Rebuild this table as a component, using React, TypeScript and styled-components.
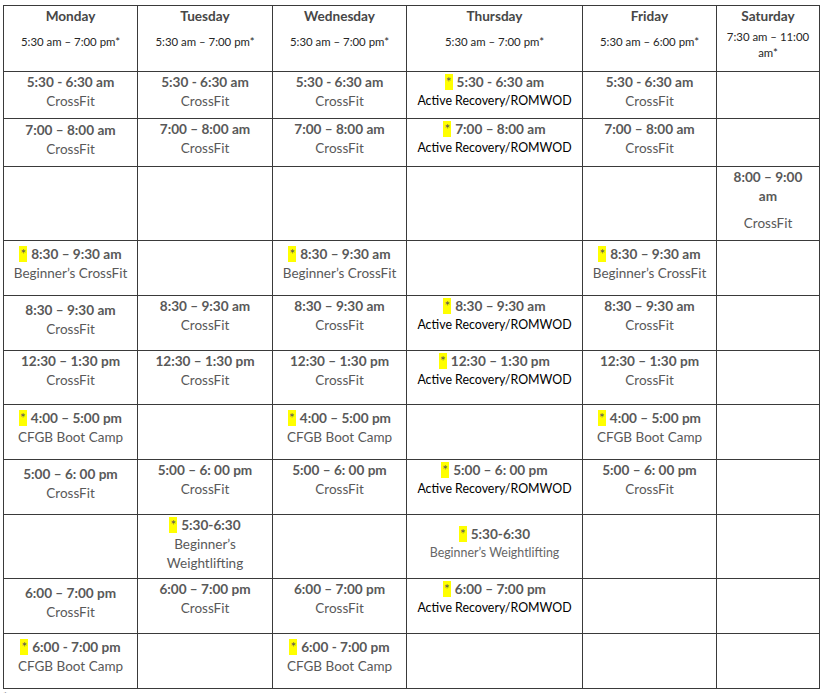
import React from 'react';
import styled, { createGlobalStyle } from 'styled-components';

type LineKind = 'time' | 'class' | 'active' | 'faint';

interface Line {
    text: string,
    kind: LineKind,
    star?: boolean,
    gap?: number
}

interface Slot {
    lines: Line[],
    drop?: number
}

interface Day {
    name: string,
    hours: string[]
}

const GlobalStyle = createGlobalStyle`
    html, body {
        margin: 0;
        padding: 0;
        background: #fff;
    }
    body {
        font-family: Lato, "Open Sans", "Liberation Sans", sans-serif;
        color: #595959;
    }
`;

const Page = styled.div`
    padding: 5px 0 0 3px;
`;

const Table = styled.table`
    width: 816px;
    border-collapse: collapse;
    table-layout: fixed;
`;

const Row = styled.tr<{ $h: number }>`
    height: ${p => p.$h}px;
`;

const HeadCell = styled.th`
    border: 1px solid #3a3a3a;
    padding: 1px 7px 0;
    vertical-align: top;
    text-align: center;
    font-weight: normal;
`;

const DayName = styled.div`
    font-size: 13.6px;
    font-weight: 700;
    line-height: 19px;
    color: #474747;
`;

const Hours = styled.div<{ $wrapped: boolean }>`
    margin-top: ${p => p.$wrapped ? 3 : 8}px;
    font-size: 11.4px;
    line-height: 16px;
    color: #262626;
`;

const Cell = styled.td<{ $drop: number }>`
    border: 1px solid #3a3a3a;
    padding: ${p => 1 + p.$drop}px 6px 0;
    vertical-align: top;
    text-align: center;
`;

const Text = styled.div<{ $kind: LineKind, $gap: number }>`
    margin-top: ${p => p.$gap}px;
    white-space: nowrap;
    font-size: ${p => p.$kind === 'time' ? '13.6px' : p.$kind === 'class' ? '13.5px' : '12.4px'};
    font-weight: ${p => p.$kind === 'time' ? 700 : 400};
    line-height: ${p => p.$kind === 'active' || p.$kind === 'faint' ? '17px' : '19px'};
    color: ${p => p.$kind === 'active' ? '#000' : p.$kind === 'faint' ? '#666' : '#595959'};
`;

const Mark = styled.span`
    padding: 0 1px;
    margin-right: 4px;
    background: #ffff00;
    color: #555;
    font-weight: 400;
`;

const Footnote = styled.div`
    margin-top: 1px;
    font-size: 11px;
    line-height: 14px;
    color: #333;
`;

const days: Day[] = [
    { name: 'Monday', hours: ['5:30 am – 7:00 pm*'] },
    { name: 'Tuesday', hours: ['5:30 am – 7:00 pm*'] },
    { name: 'Wednesday', hours: ['5:30 am – 7:00 pm*'] },
    { name: 'Thursday', hours: ['5:30 am – 7:00 pm*'] },
    { name: 'Friday', hours: ['5:30 am – 6:00 pm*'] },
    { name: 'Saturday', hours: ['7:30 am – 11:00', 'am*'] },
];

const widths = [134, 135, 134, 176, 134, 103];

const cf = (time: string, drop = 0): Slot => ({
    drop,
    lines: [{ kind: 'time', text: time }, { kind: 'class', text: 'CrossFit' }]
});

const starred = (time: string, name: string): Slot => ({
    drop: 3,
    lines: [{ kind: 'time', text: time, star: true }, { kind: 'class', text: name }]
});

const recovery = (time: string): Slot => ({
    lines: [{ kind: 'time', text: time, star: true }, { kind: 'active', text: 'Active Recovery/ROMWOD' }]
});

const rows: { h: number, cells: (Slot | null)[] }[] = [
    { h: 47, cells: [cf('5:30 - 6:30 am'), cf('5:30 - 6:30 am'), cf('5:30 - 6:30 am'), recovery('5:30 - 6:30 am'), cf('5:30 - 6:30 am'), null] },
    { h: 48, cells: [cf('7:00 – 8:00 am', 1), cf('7:00 – 8:00 am'), cf('7:00 – 8:00 am'), recovery('7:00 – 8:00 am'), cf('7:00 – 8:00 am'), null] },
    {
        h: 74, cells: [null, null, null, null, null, {
            lines: [
                { kind: 'time', text: '8:00 – 9:00' },
                { kind: 'time', text: 'am' },
                { kind: 'class', text: 'CrossFit', gap: 8 },
            ]
        }]
    },
    { h: 55, cells: [starred('8:30 – 9:30 am', 'Beginner’s CrossFit'), null, starred('8:30 – 9:30 am', 'Beginner’s CrossFit'), null, starred('8:30 – 9:30 am', 'Beginner’s CrossFit'), null] },
    { h: 55, cells: [cf('8:30 – 9:30 am', 4), cf('8:30 – 9:30 am'), cf('8:30 – 9:30 am'), recovery('8:30 – 9:30 am'), cf('8:30 – 9:30 am'), null] },
    { h: 54, cells: [cf('12:30 – 1:30 pm'), cf('12:30 – 1:30 pm'), cf('12:30 – 1:30 pm'), recovery('12:30 – 1:30 pm'), cf('12:30 – 1:30 pm'), null] },
    { h: 55, cells: [starred('4:00 – 5:00 pm', 'CFGB Boot Camp'), null, starred('4:00 – 5:00 pm', 'CFGB Boot Camp'), null, starred('4:00 – 5:00 pm', 'CFGB Boot Camp'), null] },
    { h: 55, cells: [cf('5:00 – 6: 00 pm', 4), cf('5:00 – 6: 00 pm'), cf('5:00 – 6: 00 pm'), recovery('5:00 – 6: 00 pm'), cf('5:00 – 6: 00 pm'), null] },
    {
        h: 64, cells: [null, {
            lines: [
                { kind: 'time', text: '5:30-6:30', star: true },
                { kind: 'class', text: 'Beginner’s' },
                { kind: 'class', text: 'Weightlifting' },
            ]
        }, null, {
            drop: 9,
            lines: [
                { kind: 'time', text: '5:30-6:30', star: true },
                { kind: 'faint', text: 'Beginner’s Weightlifting' },
            ]
        }, null, null]
    },
    { h: 55, cells: [cf('6:00 – 7:00 pm', 4), cf('6:00 – 7:00 pm'), cf('6:00 – 7:00 pm'), recovery('6:00 – 7:00 pm'), null, null] },
    { h: 55, cells: [starred('6:00 - 7:00 pm', 'CFGB Boot Camp'), null, starred('6:00 - 7:00 pm', 'CFGB Boot Camp'), null, null, null] },
];

function App() {
    return (
        <Page>
            <GlobalStyle />
            <Table>
                <colgroup>
                    {widths.map((w, i) => <col key={i} style={{ width: w }} />)}
                </colgroup>
                <thead>
                    <Row $h={66}>
                        {days.map(day => (
                            <HeadCell key={day.name}>
                                <DayName>{day.name}</DayName>
                                <Hours $wrapped={day.hours.length > 1}>
                                    {day.hours.map((h, i) => <div key={i}>{h}</div>)}
                                </Hours>
                            </HeadCell>
                        ))}
                    </Row>
                </thead>
                <tbody>
                    {rows.map((row, r) => (
                        <Row key={r} $h={row.h}>
                            {row.cells.map((slot, c) => (
                                <Cell key={c} $drop={slot?.drop ?? 0}>
                                    {slot?.lines.map((line, i) => (
                                        <Text key={i} $kind={line.kind} $gap={line.gap ?? 0}>
                                            {line.star && <Mark>*</Mark>}
                                            {line.text}
                                        </Text>
                                    ))}
                                </Cell>
                            ))}
                        </Row>
                    ))}
                </tbody>
            </Table>
            <Footnote>* Denotes</Footnote>
        </Page>
    );
}

export default App;
